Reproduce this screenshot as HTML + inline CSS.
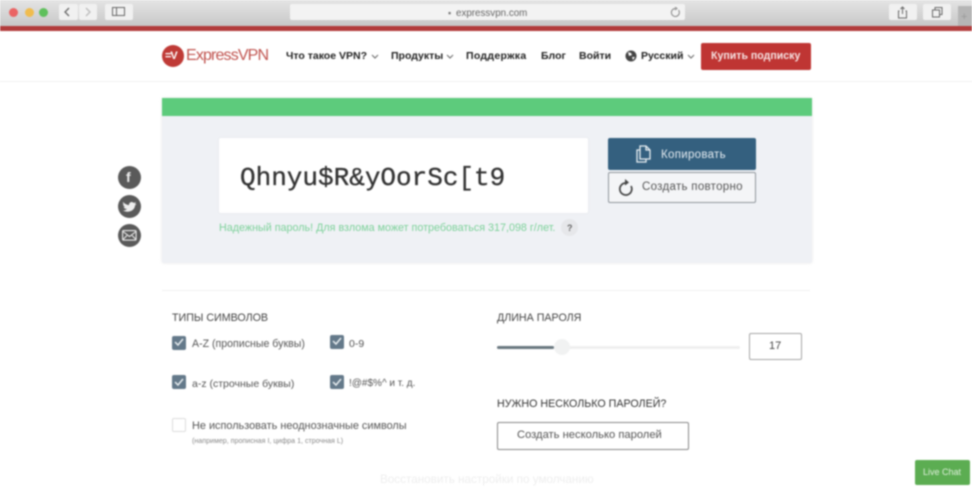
<!DOCTYPE html>
<html><head><meta charset="utf-8"><style>
*{box-sizing:border-box}
html,body{margin:0;padding:0;width:972px;height:487px;overflow:hidden;background:#fff}
#p{position:relative;width:972px;height:487px;overflow:hidden;font-family:"Liberation Sans",sans-serif;filter:blur(.8px)}
.a{position:absolute}
.t{position:absolute;white-space:nowrap;line-height:1}
.nav{font-size:10.5px;font-weight:bold;color:#222;top:51px}
.btn{position:absolute;background:#f1f1f1;border-radius:2px}
.cb{position:absolute;width:14px;height:14px;background:#64798a;border-radius:2px}
.lab{font-size:10.5px;color:#555}
.head{font-size:10.700px;color:#444}
</style></head><body><div id="p">
<div class="a" style="left:0;top:0;width:972px;height:27px;background:linear-gradient(#e4e4e4,#c6c6c6)"></div>
<div class="a" style="left:0;top:26px;width:972px;height:5px;background:#b23c3c"></div>
<div class="a" style="left:9px;top:8px;width:9px;height:9px;border-radius:50%;background:#ea6464"></div>
<div class="a" style="left:25px;top:8px;width:9px;height:9px;border-radius:50%;background:#f0bc4e"></div>
<div class="a" style="left:39px;top:8px;width:9px;height:9px;border-radius:50%;background:#5fc05c"></div>
<div class="btn" style="left:59px;top:4px;width:19px;height:16px"></div>
<div class="btn" style="left:79px;top:4px;width:18px;height:16px"></div>
<svg class="a" style="left:59px;top:4px" width="40" height="16" fill="none"><path d="M10 4L6 8l4 4" stroke="#666" stroke-width="1.3"/><path d="M27 4l4 4-4 4" stroke="#bbb" stroke-width="1.3"/></svg>
<div class="btn" style="left:105px;top:4px;width:28px;height:16px"></div>
<svg class="a" style="left:112px;top:7px" width="14" height="10" fill="none" stroke="#666"><rect x=".5" y=".5" width="12" height="8"/><path d="M4.500 .5v8"/></svg>
<div class="btn" style="left:290px;top:4px;width:395px;height:16px;background:#f3f3f3"></div>
<div class="t" style="left:448px;top:9px;font-size:9px;color:#777">▪</div>
<div class="t" style="left:456px;top:9px;font-size:9.800px;color:#666">expressvpn.com</div>
<svg class="a" style="left:670px;top:7px" width="11" height="11" fill="none" stroke="#888"><path d="M8.500 3A4 4 0 1 1 5.500 1.500"/><path d="M5 0l2 1.500L5 3"/></svg>
<div class="btn" style="left:889px;top:4px;width:28px;height:16px"></div>
<svg class="a" style="left:897px;top:6px" width="12" height="13" fill="none" stroke="#666"><path d="M2.500 5H1.500v7h8V5h-1M5.500 8V1M3.500 3l2-2 2 2"/></svg>
<div class="btn" style="left:923px;top:4px;width:28px;height:16px"></div>
<svg class="a" style="left:932px;top:7px" width="11" height="11" fill="none" stroke="#666"><rect x=".5" y="3" width="7" height="7"/><path d="M3 3V.5h7v7H7.500"/></svg>
<div class="a" style="left:958px;top:6px;width:14px;height:20px;background:#b5b5b5"></div>
<div class="t" style="left:961px;top:12px;font-size:11px;color:#999">+</div>

<div class="a" style="left:0;top:81px;width:972px;height:1px;background:#f0f0f0"></div>
<div class="a" style="left:162px;top:45px;width:22px;height:22px;border-radius:50%;background:#bf3a36"></div>
<div class="t" style="left:165px;top:51px;font-size:11px;font-weight:bold;color:#fff;letter-spacing:-1px">=V</div>
<div class="t" style="left:186px;top:48px;font-size:16px;color:#c0544f;letter-spacing:-.85px">ExpressVPN</div>
<div class="t nav" style="left:286px">Что такое VPN?</div>
<div class="t nav" style="left:391px">Продукты</div>
<div class="t nav" style="left:466px;letter-spacing:.3px">Поддержка</div>
<div class="t nav" style="left:541px">Блог</div>
<div class="t nav" style="left:579px">Войти</div>
<div class="t nav" style="left:641px">Русский</div>
<svg class="a" style="left:371px;top:54px" width="8" height="6" fill="none" stroke="#666"><path d="M1 1l3 3 3-3"/></svg>
<svg class="a" style="left:446px;top:54px" width="8" height="6" fill="none" stroke="#666"><path d="M1 1l3 3 3-3"/></svg>
<svg class="a" style="left:687px;top:54px" width="8" height="6" fill="none" stroke="#666"><path d="M1 1l3 3 3-3"/></svg>
<svg class="a" style="left:625px;top:50px" width="12" height="12"><circle cx="6" cy="6" r="5.500" fill="#444"/><path d="M3 2l3 1 1 2-3 1zM7 7l3 0-2 3z" fill="#fff"/></svg>
<div class="a" style="left:701px;top:43px;width:110px;height:27px;background:#bf3533;border-radius:2px"></div>
<div class="t" style="left:711px;top:51px;font-size:10.600px;font-weight:bold;color:#f6e4e4">Купить подписку</div>

<div class="a" style="left:162px;top:98px;width:650px;height:165px;background:#eff1f5;border-radius:2px;box-shadow:0 0 3px #e8e8e8"></div>
<div class="a" style="left:162px;top:98px;width:650px;height:18px;background:#5dcb7c"></div>
<div class="a" style="left:219px;top:138px;width:369px;height:75px;background:#fff;border-radius:2px;box-shadow:0 0 2px #e2e4e8"></div>
<div class="t" style="left:240px;top:165px;font-family:'Liberation Mono',monospace;font-size:26px;color:#333;-webkit-text-stroke:.3px #333">Qhnyu$R&amp;yOorSc[t9</div>
<div class="t" style="left:219px;top:223px;font-size:10.750px;color:#7dd19a">Надежный пароль! Для взлома может потребоваться 317,098 г/лет.</div>
<div class="a" style="left:561px;top:219px;width:17px;height:17px;border-radius:50%;background:#e6e7ea"></div>
<div class="t" style="left:567px;top:224px;font-size:9px;font-weight:bold;color:#666">?</div>

<div class="a" style="left:608px;top:138px;width:148px;height:32px;background:#34607f;border-radius:2px"></div>
<svg class="a" style="left:635px;top:144px" width="19" height="20" fill="none" stroke="#e8eef2" stroke-width="1.300"><path d="M5 2h6l4 4v9H5zM11 2v4h4M5 6H2v12h9v-3"/></svg>
<div class="t" style="left:661px;top:150px;font-size:11.500px;letter-spacing:.3px;color:#e6edf2">Копировать</div>
<div class="a" style="left:608px;top:172px;width:148px;height:31px;background:#f4f5f7;border:1px solid #8f959b;border-radius:2px"></div>
<svg class="a" style="left:618px;top:178px" width="18" height="20" fill="none" stroke="#444" stroke-width="1.700"><path d="M13 8a6 6 0 1 1-5-3"/><path d="M7 1l4 3.500-4 3z" fill="#444" stroke="none"/></svg>
<div class="t" style="left:642px;top:182px;font-size:11.500px;letter-spacing:.3px;color:#555">Создать повторно</div>

<div class="a" style="left:118px;top:166px;width:23px;height:23px;border-radius:50%;background:#5a5a5a"></div>
<div class="t" style="left:126px;top:170px;font-size:14px;font-weight:bold;color:#eee">f</div>
<div class="a" style="left:118px;top:195px;width:23px;height:23px;border-radius:50%;background:#5a5a5a"></div>
<svg class="a" style="left:122px;top:200px" width="15" height="13"><path d="M1 2c2 2 4 3 6 3 0-3 3-4 5-2l2-1-1 2 1.500 0-1.500 1.500c0 5-7 8-12 5 2 0 3-.5 4-1.500-2 0-3-1-3.500-2h1.500c-1.500-1-2-2-2-3l1.500 .5C1 4 .7 3 1 2z" fill="#eee"/></svg>
<div class="a" style="left:118px;top:224px;width:23px;height:23px;border-radius:50%;background:#5a5a5a"></div>
<svg class="a" style="left:122px;top:230px" width="15" height="11" fill="none" stroke="#eee" stroke-width="1.100"><rect x=".6" y=".6" width="13.500" height="9.500" rx="1"/><path d="M1 1.500l6.500 5 6.500-5M1 9.500l4-4M14 9.500l-4-4"/></svg>

<div class="a" style="left:162px;top:290px;width:648px;height:1px;background:#f1f1f1"></div>
<div class="t head" style="left:172px;top:313px">ТИПЫ СИМВОЛОВ</div>
<div class="cb" style="left:172px;top:336px"></div>
<div class="cb" style="left:330px;top:335px"></div>
<div class="cb" style="left:172px;top:375px"></div>
<div class="cb" style="left:330px;top:375px"></div>
<svg class="a" style="left:172px;top:335px" width="172" height="56" fill="none" stroke="#e8eef0" stroke-width="1.500"><path d="M3 7l3 3 5-6M161 6l3 3 5-6M3 47l3 3 5-6M161 47l3 3 5-6"/></svg>
<div class="t lab" style="left:192px;top:339px;font-size:10.600px">A-Z (прописные буквы)</div>
<div class="t lab" style="left:349px;top:339px;font-size:10.500px">0-9</div>
<div class="t lab" style="left:192px;top:379px">a-z (строчные буквы)</div>
<div class="t lab" style="left:349px;top:379px;font-size:10px">!@#$%^ и т. д.</div>
<div class="a" style="left:172px;top:418px;width:14px;height:14px;border:1px solid #ddd;border-radius:2px;background:#fff"></div>
<div class="t" style="left:192px;top:421px;font-size:10.900px;color:#555">Не использовать неоднозначные символы</div>
<div class="t" style="left:192px;top:438px;font-size:7.100px;color:#888">(например, прописная I, цифра 1, строчная L)</div>
<div class="t" style="left:380px;top:474px;font-size:11.700px;color:#eeeeee">Восстановить настройки по умолчанию</div>

<div class="t head" style="left:497px;top:313px">ДЛИНА ПАРОЛЯ</div>
<div class="a" style="left:497px;top:346px;width:243px;height:3px;background:#efefef;border-radius:2px"></div>
<div class="a" style="left:497px;top:346px;width:57px;height:3px;background:#6a7880;border-radius:2px"></div>
<div class="a" style="left:554px;top:339px;width:16px;height:16px;border-radius:50%;background:#f1f2f2"></div>
<div class="a" style="left:749px;top:333px;width:53px;height:27px;border:1px solid #a5a5a5;border-radius:2px;background:#fff"></div>
<div class="t" style="left:769px;top:341px;font-size:11px;color:#444">17</div>
<div class="t head" style="left:497px;top:399px;color:#333">НУЖНО НЕСКОЛЬКО ПАРОЛЕЙ?</div>
<div class="a" style="left:497px;top:422px;width:192px;height:28px;border:1px solid #888;border-radius:2px;background:#fff"></div>
<div class="t" style="left:517px;top:430px;font-size:11.200px;color:#555">Создать несколько паролей</div>
<div class="a" style="left:915px;top:460px;width:55px;height:25px;background:#5cad52;border-radius:2px"></div>
<div class="t" style="left:923px;top:468px;font-size:9px;color:#dff0dc">Live Chat</div>
</div></body></html>
